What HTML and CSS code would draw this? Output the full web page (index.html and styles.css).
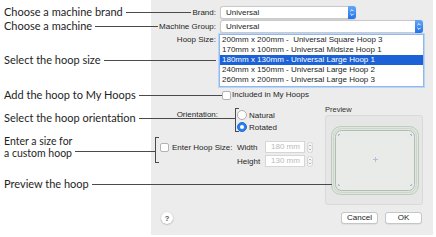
FILE: index.html
```html
<!DOCTYPE html>
<html>
<head>
<meta charset="utf-8">
<link rel="stylesheet" href="styles.css">
</head>
<body>
<div class="page">
  <div class="dialog">
    <div class="row">
      <span class="lbl">Brand:</span>
      <div class="select sel-brand"><span class="val">Universal</span><span class="arrows"><svg width="8" height="13" viewBox="0 0 8 13"><path d="M2.4 5.2 L4 3.6 L5.6 5.2 M2.4 7.8 L4 9.4 L5.6 7.8" fill="none" stroke="#fff" stroke-width="1"/></svg></span></div>
    </div>
    <div class="row row-gap">
      <span class="lbl">Machine Group:</span>
      <div class="select sel-group"><span class="val">Universal</span><span class="arrows"><svg width="8" height="13" viewBox="0 0 8 13"><path d="M2.4 5.2 L4 3.6 L5.6 5.2 M2.4 7.8 L4 9.4 L5.6 7.8" fill="none" stroke="#fff" stroke-width="1"/></svg></span></div>
    </div>
    <div class="row row-gap row-top">
      <span class="lbl">Hoop Size:</span>
      <ul class="list">
        <li>200mm x 200mm -  Universal Square Hoop 3</li>
        <li>170mm x 100mm - Universal Midsize Hoop 1</li>
        <li class="sel">180mm x 130mm - Universal Large Hoop 1</li>
        <li>240mm x 150mm - Universal Large Hoop 2</li>
        <li>260mm x 200mm - Universal Large Hoop 3</li>
      </ul>
    </div>
    <div class="included"><span class="chk"></span><span>Included in My Hoops</span></div>
    <div class="middle">
      <div class="left">
        <div class="orient">
          <span class="lbl olbl">Orientation:</span>
          <div class="radios">
            <div class="radio-row"><span class="radio"></span><span>Natural</span></div>
            <div class="radio-row"><span class="radio on"></span><span>Rotated</span></div>
          </div>
        </div>
        <div class="custom">
          <div class="custom-chk"><span class="chk"></span><span>Enter Hoop Size:</span></div>
          <div class="fields">
            <span class="flbl">Width</span><span class="input">180 mm</span><span class="stepper"><svg width="6" height="11" viewBox="0 0 6 11"><rect x="0.5" y="0.5" width="5" height="10" rx="2" fill="#f4f4f4" stroke="#d6d6d6"/><path d="M1.7 4.3 L3 3 L4.3 4.3 M1.7 6.7 L3 8 L4.3 6.7" fill="none" stroke="#aaa" stroke-width="0.8"/></svg></span>
            <span class="flbl">Height</span><span class="input">130 mm</span><span class="stepper"><svg width="6" height="11" viewBox="0 0 6 11"><rect x="0.5" y="0.5" width="5" height="10" rx="2" fill="#f4f4f4" stroke="#d6d6d6"/><path d="M1.7 4.3 L3 3 L4.3 4.3 M1.7 6.7 L3 8 L4.3 6.7" fill="none" stroke="#aaa" stroke-width="0.8"/></svg></span>
          </div>
        </div>
      </div>
      <div class="preview">
        <div class="plbl">Preview</div>
        <div class="pbox">
          <svg width="96" height="88" viewBox="0 0 96 88">
            <rect x="5.5" y="10.5" width="87" height="68" rx="9" fill="#dfe5df" stroke="#bfcbbf"/>
            <rect x="7.5" y="12.5" width="83" height="64" rx="8" fill="none" stroke="#ccd6cc"/>
            <rect x="9.5" y="14.5" width="79" height="60" rx="6" fill="#e9ebe9" stroke="#b0bdb0"/>
            <path d="M12.5 20 V18.5 H14 M84 18.5 H85.5 V20 M12.5 68 V69.5 H14 M84 69.5 H85.5 V68" fill="none" stroke="#aab0dc" stroke-width="1"/>
            <path d="M49.5 41 V46 M47 43.5 H52" fill="none" stroke="#b6bce6" stroke-width="1"/>
          </svg>
        </div>
      </div>
    </div>
    <div class="bottom">
      <span class="help">?</span>
      <div class="buttons"><button class="btn">Cancel</button><button class="btn">OK</button></div>
    </div>
  </div>

  <div class="callouts">
    <div class="callout c1"><span class="ctext">Choose a machine brand</span><span class="cline"></span></div>
    <div class="callout c2"><span class="ctext">Choose a machine</span><span class="cline"></span></div>
    <div class="callout c3"><span class="ctext">Select the hoop size</span><span class="cline"></span></div>
    <div class="callout c4"><span class="ctext">Add the hoop to My Hoops</span><span class="cline"></span></div>
    <div class="callout c5"><span class="ctext">Select the hoop orientation</span><span class="cline"></span></div>
    <span class="bracket b5"></span>
    <div class="callout c6"><span class="ctext two">Enter a size for<br>a custom hoop</span><span class="cline"></span></div>
    <span class="bracket b6"></span>
    <div class="callout c7"><span class="ctext">Preview the hoop</span><span class="cline"></span></div>
  </div>
</div>
</body>
</html>
```

FILE: styles.css
```css
html, body {
  margin: 0;
  padding: 0;
  background: #fff;
}
body {
  width: 436px;
  height: 237px;
  overflow: hidden;
}
.page {
  position: relative;
  width: 436px;
  height: 237px;
}
.dialog {
  margin-left: 151px;
  width: 282px;
  height: 235px;
  box-sizing: border-box;
  padding-top: 6px;
  background: #ececec;
  font-family: "Liberation Sans", Arial, sans-serif;
  font-size: 8px;
  color: #262626;
}
.row {
  display: grid;
  grid-template-columns: 65px 1fr;
  column-gap: 4px;
  align-items: center;
}
.row-gap { margin-top: 1px; }
.row-top { align-items: start; }
.lbl {
  text-align: right;
  line-height: 12px;
}
.select {
  display: flex;
  align-items: center;
  height: 13px;
  box-sizing: border-box;
  background: #fff;
  border: 1px solid #cacaca;
  border-radius: 3px;
  box-shadow: 0 0.5px 1px rgba(0,0,0,0.12);
}
.select .val {
  flex: 1;
  padding-left: 5px;
  line-height: 11px;
}
.arrows {
  display: flex;
  width: 8px;
  height: 13px;
  margin: -1px -1px -1px 0;
  border-radius: 0 3px 3px 0;
  background: linear-gradient(#63a8f8, #2172eb);
}
.sel-brand { width: 136px; }
.sel-group { width: 203px; }
.list {
  margin: 0 0 0 -1px;
  padding: 0 0 1px;
  list-style: none;
  width: 205px;
  height: 53px;
  box-sizing: border-box;
  background: #fff;
  border: 1px solid #8fb8ef;
  box-shadow: 0 0 0 1px #bcd4f5;
}
.list li {
  height: 10px;
  line-height: 10px;
  padding-left: 2px;
  white-space: pre;
}
.list li.sel {
  background: #1c62d6;
  color: #fff;
}
.included {
  margin-top: 3px;
  padding-left: 71px;
  display: flex;
  align-items: center;
  gap: 1px;
  height: 10px;
  line-height: 10px;
}
.chk {
  display: block;
  width: 9px;
  height: 9px;
  box-sizing: border-box;
  border: 1px solid #b3b3b3;
  border-radius: 2px;
  background: #fff;
}
.middle { display: flex; }
.left { width: 174px; }
.orient {
  margin-top: 9px;
  display: flex;
}
.olbl { width: 67px; }
.radios { margin-left: 19px; }
.radio-row {
  display: flex;
  align-items: center;
  gap: 2px;
  height: 12px;
}
.radio {
  display: flex;
  align-items: center;
  justify-content: center;
  width: 10px;
  height: 10px;
  box-sizing: border-box;
  border-radius: 50%;
  border: 1px solid #b0b0b0;
  background: #fff;
}
.radio.on {
  background: #2c7df0;
  border-color: #1f6ee0;
}
.radio.on::after {
  content: "";
  width: 4px;
  height: 4px;
  border-radius: 50%;
  background: #fff;
}
.custom {
  margin-top: 8px;
  display: flex;
  padding-left: 9px;
}
.custom-chk {
  width: 77px;
  display: flex;
  align-items: center;
  gap: 3px;
  height: 12px;
}
.fields {
  display: grid;
  grid-template-columns: 28px 40px 8px;
  grid-auto-rows: 12px;
  row-gap: 2px;
  align-items: center;
}
.input {
  height: 12px;
  box-sizing: border-box;
  background: #fff;
  border: 1px solid #d6d6d6;
  color: #b9b9b9;
  padding-left: 5px;
  line-height: 10px;
}
.stepper {
  justify-self: end;
  display: flex;
}
.preview {
  width: 98px;
  padding-top: 5px;
}
.plbl {
  height: 10px;
  line-height: 10px;
  font-size: 7.5px;
  color: #333;
}
.pbox {
  height: 90px;
  box-sizing: border-box;
  border: 1px solid #d9d9d9;
  border-radius: 3px;
  background: #e6e6e6;
}
.pbox svg { display: block; }
.bottom {
  margin-top: 7px;
  display: flex;
  align-items: center;
  justify-content: space-between;
  padding: 0 11px 0 10px;
}
.help {
  display: flex;
  align-items: center;
  justify-content: center;
  width: 12px;
  height: 12px;
  border-radius: 50%;
  background: #fff;
  box-shadow: 0 0.5px 1.5px rgba(0,0,0,0.35);
  font-size: 7.5px;
  font-weight: bold;
  color: #555;
}
.buttons {
  display: flex;
  gap: 7px;
}
.btn {
  width: 37px;
  height: 12px;
  box-sizing: border-box;
  padding: 0;
  background: #fff;
  border: 1px solid #c6c6c6;
  border-radius: 3px;
  box-shadow: 0 0.5px 0.5px rgba(0,0,0,0.1);
  font-family: "Liberation Sans", Arial, sans-serif;
  font-size: 8px;
  line-height: 10px;
  color: #222;
}

/* annotation callouts laid over the dialog */
.callouts {
  position: absolute;
  left: 0;
  top: 0;
  width: 436px;
  height: 237px;
  font-family: Lato, "Open Sans", sans-serif;
  font-size: 11px;
  color: #1e1e1e;
}
.callout {
  position: absolute;
  left: 4px;
  height: 12px;
  display: flex;
  align-items: center;
  gap: 3px;
}
.ctext {
  white-space: nowrap;
  line-height: 12px;
}
.cline {
  flex: 1;
  height: 1px;
  background: #4a4a4a;
}
.c1 { top: 6px; width: 187px; }
.c2 { top: 20px; width: 154px; }
.c3 { top: 54px; width: 212px; }
.c4 { top: 89px; width: 218px; }
.c5 { top: 112px; width: 231px; }
.c6 {
  top: 135px;
  width: 151px;
  height: 24px;
  align-items: flex-end;
}
.c6 .ctext {
  font-size: 10.5px;
  line-height: 12px;
}
.c6 .cline { margin-bottom: 7px; }
.c7 { top: 178px; width: 328px; }
.bracket {
  position: absolute;
  width: 4px;
  box-sizing: border-box;
  border: 1px solid #4a4a4a;
  border-right: 0;
}
.b5 { left: 235px; top: 108px; height: 24px; }
.b6 { left: 155px; top: 137px; height: 26px; }
```
